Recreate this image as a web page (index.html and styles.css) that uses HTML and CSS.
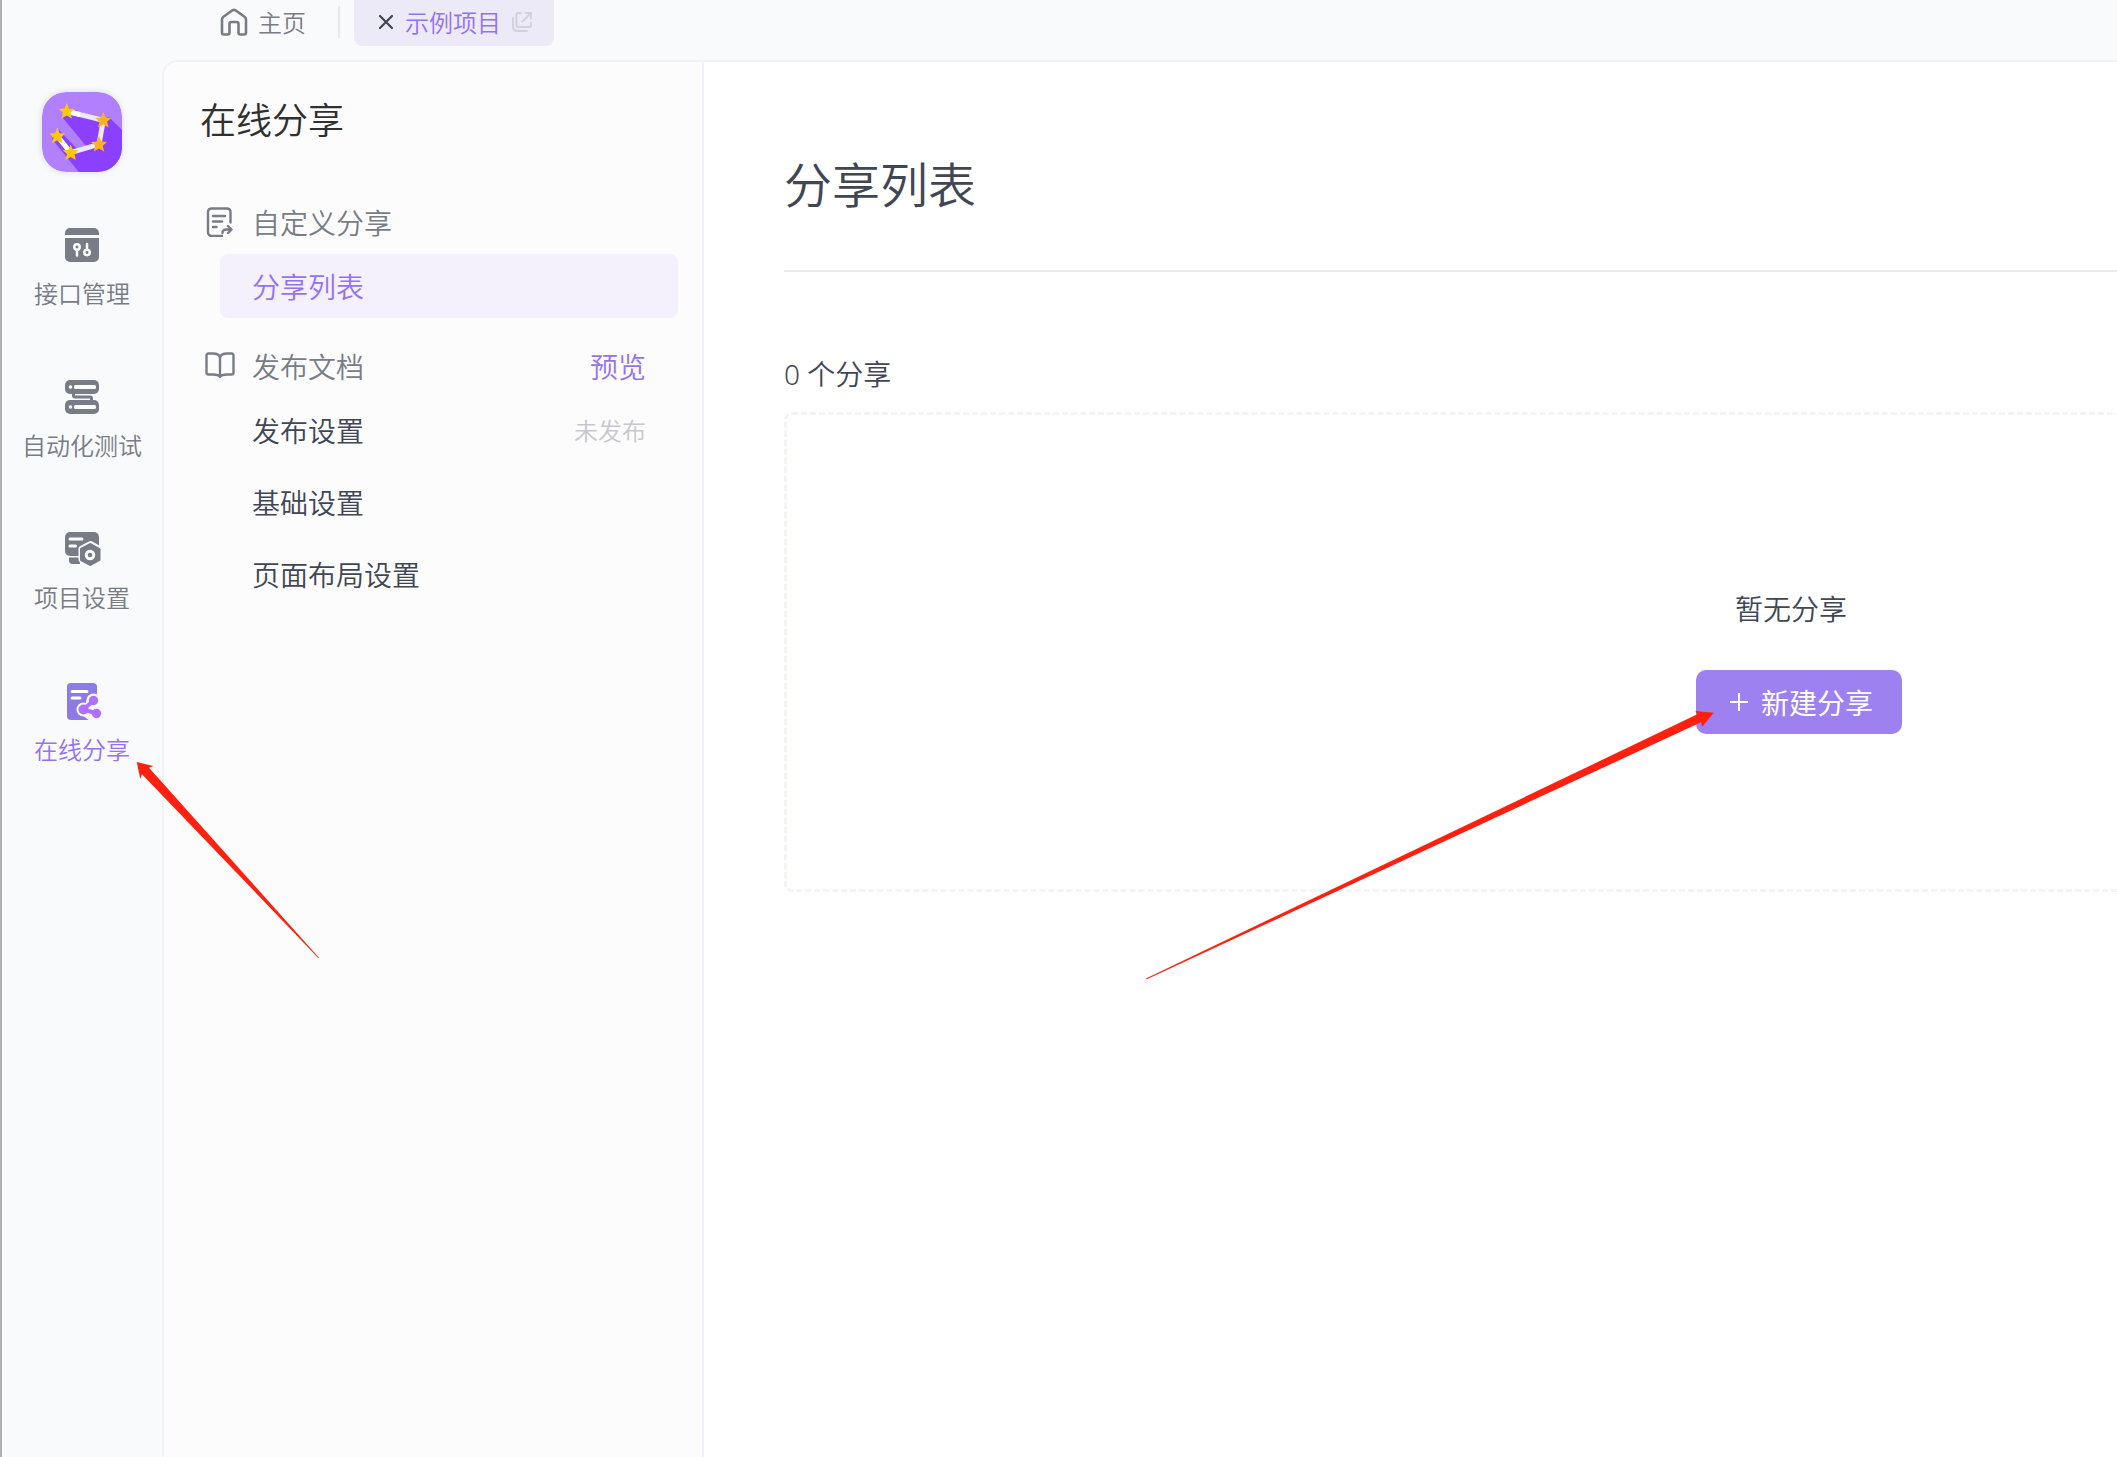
FILE: index.html
```html
<!DOCTYPE html>
<html lang="zh-CN">
<head>
<meta charset="utf-8">
<title>在线分享</title>
<link rel="stylesheet" href="styles.css">
</head>
<body>
<div class="app">
  <nav class="sidebar">
    <svg class="logo" viewBox="0 0 80 80">
      <defs>
        <clipPath id="tile"><rect width="80" height="80" rx="24"/></clipPath>
        <path id="star" d="M0-8.200 2.300-2.700 8-2.400 3.700 1.400 5.200 7.200 0 4.200-5.200 7.200-3.700 1.400-8-2.400-2.300-2.700Z"/>
      </defs>
      <g clip-path="url(#tile)">
        <rect width="80" height="80" fill="#b080ff"/>
        <path fill="#8b40ff" d="M20 25 27 16 60 27 67 25 90 48V90H45L10 47 17 38 36 58 45 55Z"/>
      </g>
      <g fill="none" stroke-width="5">
        <path stroke="#e9e9f8" d="M24.700 19.300 61.300 28.300 57 52.300 28.700 60.700"/>
        <path stroke="#fff" d="M28.700 60.700 15.300 44M27 20 38 22.500"/>
      </g>
      <use href="#star" x="24.700" y="19.300" fill="#ffc800"/>
      <use href="#star" x="61.300" y="28.300" fill="#ffb31a"/>
      <use href="#star" x="57" y="52.300" fill="#ffb31a"/>
      <use href="#star" x="28.700" y="60.700" fill="#ffc800"/>
      <use href="#star" x="15.300" y="44" fill="#ffc800"/>
    </svg>
    <a class="side-item" href="#">
      <svg class="side-icon" viewBox="0 0 36 36">
        <path fill="currentColor" d="M1 8V6a5 5 0 0 1 5-5H30a5 5 0 0 1 5 5V8ZM1 11H35V30a5 5 0 0 1-5 5H6a5 5 0 0 1-5-5Z"/>
        <g fill="none" stroke="#fff" stroke-width="2.500" stroke-linecap="round"><circle cx="13" cy="20" r="2.700"/><path d="M13 23v5.500M23 17v5.500"/><circle cx="23" cy="25.500" r="2.700"/></g>
      </svg>
      <span>接口管理</span>
    </a>
    <a class="side-item" href="#">
      <svg class="side-icon" viewBox="0 0 36 36">
        <rect x="1" y="1" width="34" height="14" rx="5" fill="currentColor"/><rect x="1" y="21" width="34" height="14" rx="5" fill="currentColor"/>
        <path d="M9.500 14v2.500q0 1.500 1.500 1.500h15q1.500 0 1.500 1.500V22" fill="none" stroke="currentColor" stroke-width="3"/>
        <g fill="#fff"><circle cx="6.500" cy="8" r="1.800"/><circle cx="6.500" cy="28" r="1.800"/><rect x="10" y="6" width="22" height="4" rx="1.500"/><rect x="10" y="26" width="22" height="4" rx="1.500"/></g>
      </svg>
      <span>自动化测试</span>
    </a>
    <a class="side-item" href="#">
      <svg class="side-icon" viewBox="0 0 36 36">
        <rect x="1" y="1" width="34" height="24" rx="5" fill="currentColor"/>
        <path fill="currentColor" d="M5 26.500H16V33H8a3.500 3.500 0 0 1-3-3.500Z"/>
        <path stroke="#fff" stroke-width="3" stroke-linecap="round" d="M6 8H18M6 15H11.500"/>
        <path d="M26.500 12.500 35.500 17.500V29L26.500 34.500 17 29V17.500Z" fill="currentColor" stroke="#f9fafc" stroke-width="5" stroke-linejoin="round"/>
        <path d="M26.500 13 35.500 18V29L26.500 34 17 29V18Z" fill="currentColor" stroke="currentColor" stroke-width="2" stroke-linejoin="round"/>
        <circle cx="26" cy="24" r="3.800" fill="currentColor" stroke="#fff" stroke-width="3"/>
      </svg>
      <span>项目设置</span>
    </a>
    <a class="side-item active" href="#">
      <svg class="side-icon" viewBox="0 0 36 36">
        <path fill="#8c7ae6" d="M3 4a4 4 0 0 1 4-4H29a4 4 0 0 1 4 4V37H7a4 4 0 0 1-4-4Z"/>
        <path stroke="#fff" stroke-width="3" stroke-linecap="round" d="M8 8.500H23M8 15H16"/>
        <g fill="#f9fafc"><circle cx="29.500" cy="17.500" r="7"/><circle cx="19.500" cy="26.500" r="7"/><circle cx="32.500" cy="30.500" r="7"/></g>
        <path fill="#f9fafc" d="M24 13 33 22V38H26L18 32Z"/>
        <path fill="none" stroke="#b070ff" stroke-width="4" d="M29.500 17.500 19.500 26.500 32.500 30.500"/>
        <g fill="#b070ff"><circle cx="29.500" cy="17.500" r="4.700"/><circle cx="19.500" cy="26.500" r="5"/><circle cx="32.500" cy="30.500" r="4.700"/></g>
      </svg>
      <span>在线分享</span>
    </a>
  </nav>

  <div class="body">
    <header class="tabs">
      <a class="home" href="#">
        <svg class="home-icon" viewBox="0 0 28 28" fill="none" stroke="currentColor" stroke-width="2.600" stroke-linejoin="round"><path d="M2 11.500Q2 10 3.200 9L12.500 2.300Q14 1.300 15.500 2.300L24.800 9Q26 10 26 11.500V24.500Q26 26.500 24 26.500H20.500Q18.500 26.500 18.500 24.500V16Q18.500 14 16.500 14H11.500Q9.500 14 9.500 16V24.500Q9.500 26.500 7.500 26.500H4Q2 26.500 2 24.500Z"/></svg>
        <span>主页</span>
      </a>
      <div class="tab">
        <button class="close" type="button" aria-label="关闭"><svg viewBox="0 0 16 16" fill="none" stroke="#404653" stroke-width="2.200" stroke-linecap="round"><path d="M2 2 14 14M14 2 2 14"/></svg></button>
        <span>示例项目</span>
        <svg class="open-icon" viewBox="0 0 20 20" fill="none" stroke="#d2d0dd" stroke-width="1.900" stroke-linecap="round" stroke-linejoin="round"><path d="M9 1H6.500Q4.500 1 4.500 3V13Q4.500 15 6.500 15H17Q19 15 19 13V11M10.500 9.500 19 1M13.500 1H19V6.500M1 6V15Q1 19 5 19H15"/></svg>
      </div>
    </header>

    <div class="panel">
      <aside class="subnav">
        <h2>在线分享</h2>
        <section class="group">
          <div class="group-head">
            <svg class="group-icon" viewBox="0 0 30 30" fill="none" stroke="currentColor" stroke-width="2.400" stroke-linecap="round" stroke-linejoin="round"><path d="M17 29H7Q3 29 3 25V5Q3 1.500 7 1.500H21.500Q25.500 1.500 25.500 5V15.500M8 9H20M8 14.500H17M8 20H11.500M17.500 26Q17.500 22.500 21.500 22.500H26M23 19 26.500 22.500 23 26"/></svg>
            <span>自定义分享</span>
          </div>
          <a class="row selected" href="#">分享列表</a>
        </section>
        <section class="group">
          <div class="group-head">
            <svg class="group-icon" viewBox="0 0 30 30" fill="none" stroke="currentColor" stroke-width="2.400" stroke-linecap="round" stroke-linejoin="round"><path d="M15 6.500Q14 2.500 8 2.500H3.500Q1.500 2.500 1.500 4.500V21.500Q1.500 23.500 3.500 23.500H8Q13.500 23.500 15 26Q16.500 23.500 22 23.500H26.500Q28.500 23.500 28.500 21.500V4.500Q28.500 2.500 26.500 2.500H22Q16 2.500 15 6.500ZV26"/></svg>
            <span>发布文档</span>
            <a class="preview" href="#">预览</a>
          </div>
          <a class="row" href="#">发布设置<small>未发布</small></a>
          <a class="row" href="#">基础设置</a>
          <a class="row" href="#">页面布局设置</a>
        </section>
      </aside>

      <main class="main">
        <div class="content">
          <h1>分享列表</h1>
          <p class="count">0 个分享</p>
          <div class="empty">
            <p>暂无分享</p>
            <button class="create" type="button"><svg viewBox="0 0 20 20" stroke="#fff" stroke-width="2"><path d="M1 10H19M10 1V19"/></svg>新建分享</button>
          </div>
        </div>
      </main>
    </div>
  </div>

  <svg class="arrow arrow-share" viewBox="0 0 184 198"><path fill="#ff2010" d="M.700 0 17.300 4 13 5.700 183 195.700 182.500 196.200 6 12.300 4.300 17Z"/></svg>
  <svg class="arrow arrow-create" viewBox="0 0 570 272"><path fill="#ff2010" d="M567.700 3.700 549.300 2 551.300 5.300 0 269.500 .300 270.500 555 13.300 556.300 17.700Z"/></svg>
</div>
</body>
</html>
```
FILE: styles.css
```css
* { box-sizing: border-box; }

body {
  margin: 0;
  color: #404653;
  background: #f9fafc;
  font: 350 28px/40px "Noto Sans CJK SC", sans-serif;
}

h1, h2, p { margin: 0; font-weight: 350; }
a { color: inherit; text-decoration: none; }
button { border: 0; font: inherit; }
svg { display: block; flex: none; }

.app {
  position: relative;
  display: flex;
  min-height: 100vh;
  border-left: 2px solid #b0b0b3;
  overflow: hidden;
}

.sidebar {
  flex: none;
  width: 160px;
  padding-top: 92px;
  display: flex;
  flex-direction: column;
  align-items: center;
  color: #787c86;
  font-size: 24px;
}

.logo {
  width: 80px;
  height: 80px;
  margin-bottom: 55px;
  border-radius: 24px;
  box-shadow: 0 0 6px #0002;
}

.side-item {
  height: 152px;
  display: flex;
  flex-direction: column;
  align-items: center;
  gap: 10px;
}

.side-icon { width: 36px; height: 36px; overflow: visible; }
.side-item.active { color: #9373ee; }

.body {
  flex: 1;
  min-width: 0;
  display: flex;
  flex-direction: column;
}

.tabs {
  height: 60px;
  padding-left: 58px;
  display: flex;
  align-items: flex-start;
  color: #787c86;
  font-size: 24px;
}

.home {
  height: 32px;
  margin-top: 6px;
  padding-right: 32px;
  display: flex;
  align-items: center;
  gap: 10px;
  border-right: 2px solid #e8e9ed;
}

.home-icon { width: 28px; height: 28px; }

.tab {
  width: 200px;
  height: 46px;
  margin-left: 14px;
  padding: 0 0 2px 24px;
  display: flex;
  align-items: center;
  gap: 11px;
  border-radius: 0 0 8px 8px;
  background: #edeaf8;
  color: #9373ee;
}

.close { width: 16px; padding: 0; background: none; }
.open-icon { width: 20px; height: 20px; }

.panel {
  flex: 1;
  display: flex;
  border: solid #f1f2f7;
  border-width: 2px 0 0 2px;
  border-top-left-radius: 16px;
  background: #fff;
  overflow: hidden;
}

.subnav {
  flex: none;
  width: 540px;
  padding: 32px 24px 0 36px;
  border-right: 2px solid #f1f2f7;
  background: #fcfcfd;
}

.subnav h2 {
  margin-bottom: 48px;
  color: #303030;
  font-size: 36px;
  line-height: 48px;
}

.group { margin-bottom: 16px; }

.group-head {
  height: 64px;
  padding: 0 32px 0 5px;
  display: flex;
  align-items: center;
  gap: 17px;
  color: #787c86;
}

.group-icon { width: 30px; height: 30px; }
.preview { margin-left: auto; color: #9373ee; }

.row {
  height: 64px;
  margin: 0 0 8px 20px;
  padding: 0 32px;
  display: flex;
  align-items: center;
  justify-content: space-between;
  border-radius: 8px;
}

.row small { color: #c6c8cd; font-size: 24px; }
.row.selected { background: #f4f0fc; color: #9373ee; }
.row:last-child { margin-bottom: 0; }

.main {
  flex: 1;
  min-width: 0;
  padding: 84px 0 0 80px;
  overflow: hidden;
}

/* The list keeps its full width and is clipped in narrow windows. */
.content { min-width: 2030px; }

h1 {
  padding-bottom: 52px;
  border-bottom: 2px solid #ebebf2;
  font-size: 48px;
  line-height: 72px;
}

.count {
  margin: 82px 0 18px;
  font-family: "Noto Sans", "Noto Sans CJK SC", sans-serif;
}

.empty {
  height: 480px;
  padding-top: 18px;
  display: flex;
  flex-direction: column;
  align-items: center;
  justify-content: center;
  gap: 42px;
  border: 3px dashed #f3f3f8;
  border-radius: 8px;
}

.empty p { padding-right: 16px; }

.create {
  height: 64px;
  padding: 0 29px 0 33px;
  display: flex;
  align-items: center;
  gap: 12px;
  border-radius: 10px;
  background: #9d81f0;
  color: #fff;
  font-weight: 400;
}

.create svg { width: 20px; height: 20px; }

/* Annotation arrows drawn over the interface. */
.arrow { position: absolute; pointer-events: none; }
.arrow-share { left: 134px; top: 762px; width: 184px; height: 198px; }
.arrow-create { left: 1144px; top: 709px; width: 570px; height: 272px; }
```
